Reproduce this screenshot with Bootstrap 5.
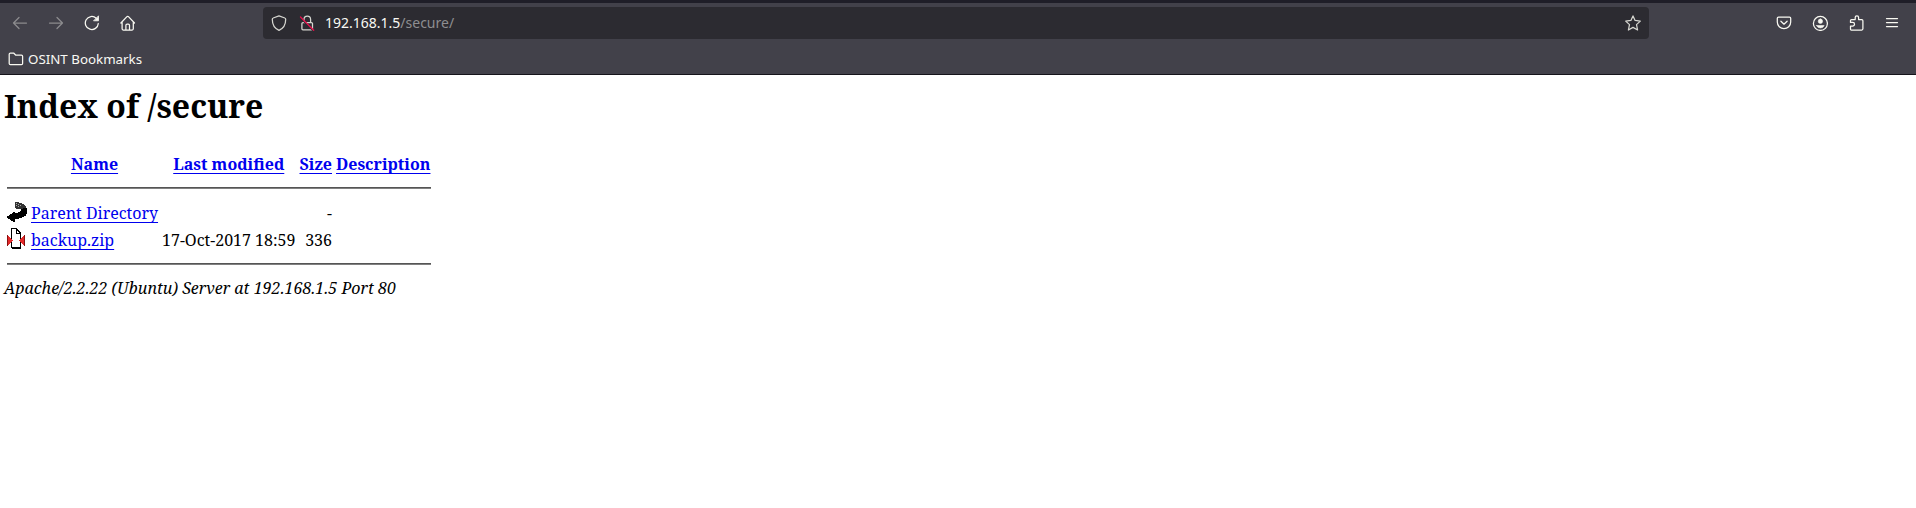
<!DOCTYPE html>
<html lang="en"><head><meta charset="utf-8"><title>Index of /secure</title>
<link href="https://cdn.jsdelivr.net/npm/bootstrap@5.3.0/dist/css/bootstrap.min.css" rel="stylesheet">
<style>
body{background:#fff;color:#000;font:16px/22px "Noto Serif",serif;overflow:hidden}
.chrome{height:75px;background:#42414a;border-top:3px solid #1f1e28;border-bottom:1px solid #15141b;font-family:"Noto Sans",sans-serif;color:#f9f9f4}
.tools{height:40px}
.chrome svg{display:block;flex:none;fill:none;stroke:#f9f9f2;stroke-width:1.25;stroke-linecap:round;stroke-linejoin:round}
.chrome .dim{opacity:.4}
.nav-icons{width:263px;padding-left:12px;gap:20px}
.address{width:1386px;height:32px;background:#2c2b31;border-radius:4px;font-size:14px;padding:0 8px}
.address svg{stroke:#d6d6d0}
.lock-icon{margin:0 10px 0 12px}
.path{color:#8e8e90}
.menu-icons{gap:20px;padding-right:16px}
.marks{height:31px;font-size:13.33px;padding-left:8px;gap:4px}
main{padding:12px 4px}
h1{font-size:32px;line-height:38px;font-weight:700;margin:0 0 28px}
.listing{display:grid;grid-template-columns:20px 127px 133.5px 32.5px 95px;column-gap:4px;margin-left:3px;width:max-content}
.listing a{color:#00e;text-decoration:underline;text-decoration-thickness:1px;text-underline-offset:3px;text-decoration-skip-ink:none}
.rule{grid-column:1/-1;height:2px;background:#808080;border-top:1px solid #555}
.rule-top{margin:12px 0 13px}
.rule-end{margin:7px 0 12px}
.entry{height:27px;white-space:nowrap}
.entry svg{display:block;margin-top:-1px}
.signature{line-height:22px}
</style></head><body>
<header class="chrome">
<div class="tools d-flex align-items-center">
 <div class="nav-icons d-flex align-items-center">
  <svg class="dim" width="16" height="16" viewBox="0 0 16 16"><path d="M1.5 8H14.5M7 2.5 1.5 8 7 13.5"/></svg>
  <svg class="dim" width="16" height="16" viewBox="0 0 16 16"><path d="M1.5 8H14.5M9 2.5 14.5 8 9 13.5"/></svg>
  <svg width="16" height="16" viewBox="0 0 16 16"><path d="M14.3 8.5A6.5 6.5 0 1 1 12.2 3.2"/><path d="M14.5 1.2V5.8H9.9Z" fill="#f9f9f2" stroke-width=".8"/></svg>
  <svg width="16" height="16" viewBox="0 0 16 16"><path d="M.9 8 6.7 1.9Q7.7 .9 8.7 1.9L14.5 8M2.1 7V13.8Q2.1 15 3.3 15H12.1Q13.3 15 13.3 13.8V7M5.9 15V10.2Q5.9 9 7.1 9H8.3Q9.5 9 9.5 10.2V15"/></svg>
 </div>
 <div class="address d-flex align-items-center">
  <svg width="16" height="16" viewBox="0 0 16 16"><path d="M8 .9 13.8 3Q14.7 3.3 14.7 4.3C14.7 10 12.5 13.5 8 15.3 3.5 13.5 1.3 10 1.3 4.3Q1.3 3.3 2.2 3Z"/></svg>
  <svg class="lock-icon" width="16" height="16" viewBox="0 0 16 16"><path d="M5 7.5V4.4a3.3 3.3 0 0 1 6.6 0V7.5M4 7.5H12.4Q13.5 7.5 13.5 8.6V13.8Q13.5 14.9 12.4 14.9H4Q2.9 14.9 2.9 13.8V8.6Q2.9 7.5 4 7.5Z"/><path d="M1.8 3.6 13.4 15.2" stroke="#2c2b31" stroke-width="1.2"/><path d="M1.5 2 14.7 15.2" stroke="#e3104b" stroke-width="1.3"/></svg>
  <span>192.168.1.5</span><span class="path">/secure/</span>
  <svg class="ms-auto" width="16" height="16" viewBox="0 0 16 16"><path d="M8 .9 10.1 5.4 15.3 6.1 11.5 9.6 12.6 15 8 12.4 3.4 15 4.5 9.6.7 6.1 5.9 5.4Z"/></svg>
 </div>
 <div class="menu-icons d-flex align-items-center ms-auto">
  <svg width="16" height="16" viewBox="0 0 16 16"><path d="M2.5 2H13.5Q14.7 2 14.7 3.2V7A6.7 6.7 0 0 1 1.3 7V3.2Q1.3 2 2.5 2ZM4.9 6.2 8 9.2 11.1 6.2"/></svg>
  <svg width="16" height="16" viewBox="0 0 16 16"><circle cx="8.4" cy="8.4" r="7"/><path d="M8.4 4a2.2 2.2 0 1 1 0 4.4 2.2 2.2 0 0 1 0-4.4ZM4.6 10.6H12.2Q11.4 12.9 8.4 12.9T4.6 10.6Z" fill="#f9f9f2" stroke-width=".6"/></svg>
  <svg width="16" height="16" viewBox="-.7 0 16 16"><path d="M2.6 15H13Q14.2 15 14.2 13.8V5.8Q14.2 4.6 13 4.6H9.9V2.6a1.7 1.7 0 0 0-3.4 0V4.6H2.8Q1.8 4.6 1.8 5.6V7.4H4a1.7 1.7 0 0 1 0 3.6H1.8V14.2Q1.8 15 2.6 15Z"/></svg>
  <svg width="16" height="16" viewBox="0 0 16 16"><path d="M2.5 3.5H13.5M2.5 7.5H13.5M2.5 11.5H13.5"/></svg>
 </div>
</div>
<div class="marks d-flex align-items-center">
 <svg width="16" height="16" viewBox="0 0 16 16"><path d="M1.2 12.4V3.2Q1.2 2 2.4 2H5.6L7.6 4H13.4Q14.6 4 14.6 5.2V12.4Q14.6 13.6 13.4 13.6H2.4Q1.2 13.6 1.2 12.4Z"/></svg>
 <span>OSINT Bookmarks</span>
</div>
</header>
<main>
<h1>Index of /secure</h1>
<div class="listing">
 <span></span><b class="text-center"><a href="#">Name</a></b><b class="text-center"><a href="#">Last modified</a></b><b><a href="#">Size</a></b><b><a href="#">Description</a></b>
 <div class="rule rule-top"></div>
 <div class="entry"><svg width="20" height="22" viewBox="0 0 20 22" shape-rendering="crispEdges"><path d="M8 1H12V2H15V3H17V4H18V5H19V7H20V8H9V7H8Z" fill="#333"/><path d="M9 2h1v1h-1zM11 3h1v1h-1zM9 4h1v1h-1zM13 4h1v1h-1zM11 5h1v1h-1z" fill="#aaa"/><path d="M20 7V13H19V15H17V16H15V17H12V18H8V21H6V20H4V19H3V18H1V17H0V15H2V14H3V13H5V12H6V11H8V12H11V11H13V10H14V8H16V7Z"/></svg></div>
 <div class="entry"><a href="#">Parent Directory</a></div><div class="entry"></div><div class="entry text-end">-</div><div></div>
 <div class="entry"><svg width="20" height="22" viewBox="0 0 20 22" shape-rendering="crispEdges"><path d="M4 0H10L14 5V21H5V20H4Z"/><path d="M5 1H9V6H13V19H5Z" fill="#fff"/><path d="M10 2 12 5H10Z" fill="#fff"/><path d="M0 7H1V8H2V9H3V10H4V11H5V12H6V13H5V14H4V15H3V16H2V17H1V18H0Z" fill="#e32a2a"/><path d="M18 7H17V8H16V9H15V10H14V11H13V12H12V13H13V14H14V15H15V16H16V17H17V18H18Z" fill="#e32a2a"/><path d="M0 7H1V18H0ZM17 7H18V18H17Z" fill="#811"/></svg></div>
 <div class="entry"><a href="#">backup.zip</a></div><div class="entry">17-Oct-2017 18:59</div><div class="entry text-end">336</div><div></div>
 <div class="rule rule-end"></div>
</div>
<address class="signature m-0 fst-italic">Apache/2.2.22 (Ubuntu) Server at 192.168.1.5 Port 80</address>
</main>
<script src="https://cdn.jsdelivr.net/npm/bootstrap@5.3.0/dist/js/bootstrap.bundle.min.js"></script>
</body></html>
